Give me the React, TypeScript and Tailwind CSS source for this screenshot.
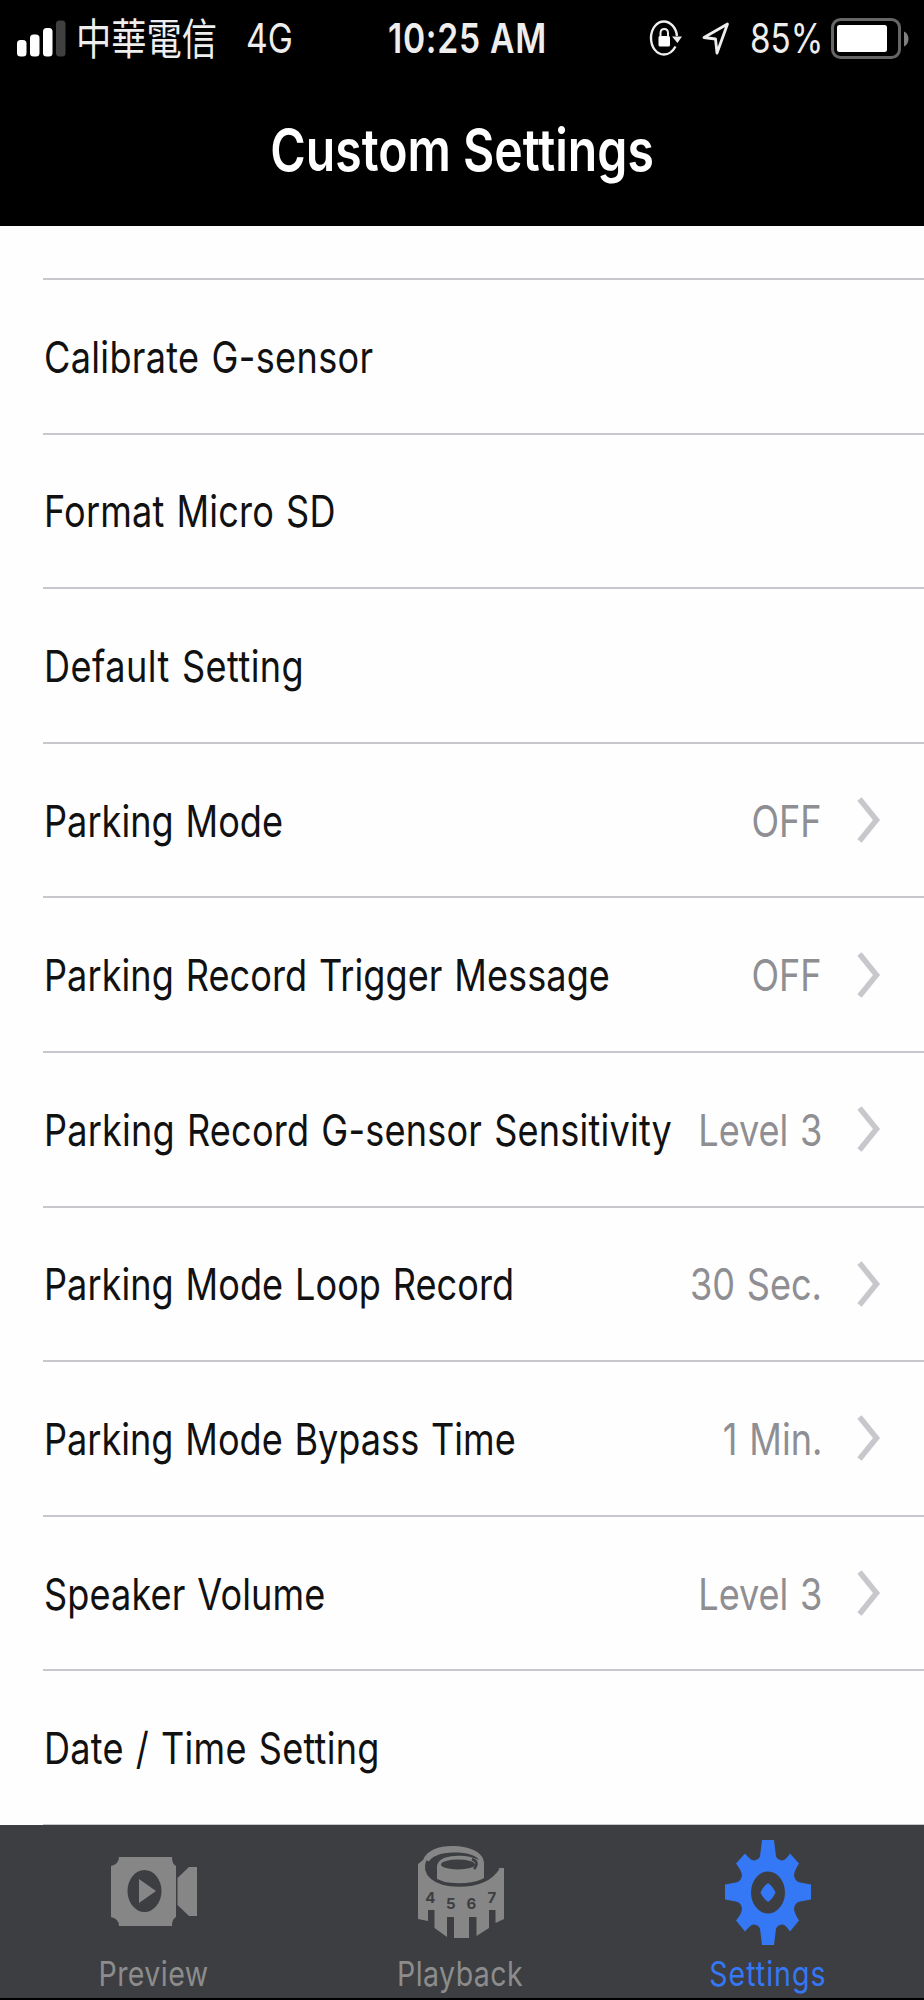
import React from 'react';

type Row = { label: string; value?: string; tracking: string };

const rows: Row[] = [
  { label: 'Calibrate G-sensor', tracking: 'tracking-[0.4px]' },
  { label: 'Format Micro SD', tracking: 'tracking-[0.25px]' },
  { label: 'Default Setting', tracking: 'tracking-[0.55px]' },
  { label: 'Parking Mode', value: 'OFF', tracking: 'tracking-[0.05px]' },
  { label: 'Parking Record Trigger Message', value: 'OFF', tracking: 'tracking-[0.08px]' },
  { label: 'Parking Record G-sensor Sensitivity', value: 'Level 3', tracking: 'tracking-[0.26px]' },
  { label: 'Parking Mode Loop Record', value: '30 Sec.', tracking: 'tracking-[0.06px]' },
  { label: 'Parking Mode Bypass Time', value: '1 Min.', tracking: 'tracking-[0.01px]' },
  { label: 'Speaker Volume', value: 'Level 3', tracking: 'tracking-[0.15px]' },
  { label: 'Date / Time Setting', tracking: 'tracking-[0.3px]' },
];

function StatusBar() {
  return (
    <div className="flex h-[78px] items-center pl-[17px] pr-[15px] text-[41px] leading-none whitespace-nowrap text-[#eeeeee]">
      <svg width="49" height="37" viewBox="0 0 49 37" className="mb-[2px] shrink-0">
        <rect x="0" y="20" width="9.5" height="16.5" rx="3.5" fill="#fff" />
        <rect x="13" y="14.5" width="9.5" height="22" rx="3.5" fill="#fff" />
        <rect x="26" y="8" width="9.5" height="28.5" rx="3.5" fill="#fff" />
        <rect x="39" y="0.5" width="9.5" height="36" rx="3.5" fill="#404040" />
      </svg>
      <div className="mb-[3px] ml-[10px] w-[170px]">
        <span className="inline-block origin-left scale-x-[0.82] font-['Noto_Sans_CJK_TC',sans-serif] text-[43px] font-normal">中華電信</span>
      </div>
      <div className="mb-[1px] w-[142px]">
        <span className="inline-block origin-left scale-x-[0.82] font-normal">4G</span>
      </div>
      <div className="mb-[1px] w-[262px]">
        <span className="inline-block origin-left scale-x-[0.82] font-semibold tracking-[0.9px]">10:25 AM</span>
      </div>
      <svg width="34" height="38" viewBox="0 0 34 38" className="mb-[2px] shrink-0" fill="none" stroke="#eee" strokeWidth="2.4">
        <path d="M28 17C27 8 21 2.500 15 2.500C7.500 2.500 2 10 2 19S7.500 35.500 15 35.500C20 35.500 24 32 26.500 27.500" />
        <path d="M23 17.500H33L28.500 24Z" fill="#eee" stroke="none" />
        <rect x="9.500" y="17" width="11.500" height="10.500" rx="1.500" fill="#fff" stroke="none" />
        <path d="M11.500 18V14C11.500 8.500 19 8.500 19 14V18" strokeWidth="2" />
      </svg>
      <svg width="28" height="34" viewBox="0 0 28 34" className="ml-[19px] shrink-0" fill="none" stroke="#eee" strokeWidth="2.8" strokeLinejoin="round">
        <path d="M25.500 2L2 15.500L13.500 17L15 31Z" />
      </svg>
      <div className="mb-[1px] ml-[20px] w-[81px]">
        <span className="inline-block origin-left scale-x-[0.81] font-normal">85%</span>
      </div>
      <svg width="78" height="42" viewBox="0 0 78 42" className="mb-[1px] shrink-0">
        <rect x="1.500" y="1.500" width="67" height="38" rx="8" fill="none" stroke="#666" strokeWidth="3" />
        <rect x="6" y="7" width="50" height="27" rx="2.500" fill="#fff" />
        <path d="M73 13.500C79 16 79 26 73 28.500Z" fill="#808080" />
      </svg>
    </div>
  );
}

function Chevron() {
  return (
    <svg width="24" height="46" viewBox="0 0 24 46" className="shrink-0" fill="none" stroke="#c7c7cc" strokeWidth="5.500">
      <path d="M2.500 2L19.500 23L2.500 44" />
    </svg>
  );
}

function SettingRow({ label, value, tracking }: Row) {
  return (
    <li className="ml-[43px] flex h-[154.600px] items-center border-b-2 border-[#c8c7cc] pr-[43px] whitespace-nowrap">
      <div className="w-0 flex-1 pt-[1px] pl-[1px]">
        <span className={`inline-block origin-left scale-x-[0.82] text-[44px] leading-none text-[#111] [word-spacing:2px] ${tracking}`}>{label}</span>
      </div>
      {value && (
        <>
          <div className="mr-[35px] flex w-0 justify-end pt-[1px]">
            <span className="inline-block origin-right scale-x-[0.82] text-[44px] leading-none text-[#8e8e93] [word-spacing:2px]">{value}</span>
          </div>
          <Chevron />
        </>
      )}
    </li>
  );
}

function PreviewIcon() {
  return (
    <svg width="88" height="106" viewBox="0 0 88 106" fill="#868686">
      <path d="M9 18H62Q62 25 66 27V78Q62 80 62 87H9Q9 80 1 78V27Q9 25 9 18ZM34.500 31A17 21 0 1 0 34.500 73A17 21 0 1 0 34.500 31Z" fillRule="evenodd" />
      <path d="M29 40L46 52L29 64Z" />
      <path d="M67.500 39L79 28H87V77H79L67.500 66Z" />
    </svg>
  );
}

function PlaybackIcon() {
  return (
    <svg width="88" height="106" viewBox="0 0 88 106">
      <path
        d="M1 25L6 21C10 11 22 7 35 7C54 7 67 14 67 24V38Q76 36 81 29H87V80L78.500 84V71H72V89L59.500 97V78H52V99H37V78H30V98L17.500 89V71H11V82L1 80Z"
        fill="#868686"
      />
      <path d="M67 40L81 29L84 24L67 24Z" fill="#3d3e42" />
      <path d="M11 22C6 34 16 46 42 46C62 46 74 40 81 29" fill="none" stroke="#3d3e42" strokeWidth="3.500" />
      <path d="M10 26C13 17 24 13.500 37 13.500C50 13.500 59 16 62 21C54 17 46 16.500 38 17C27 17.500 21 21 20 27V42C13 38 9 32 10 26Z" fill="#3d3e42" />
      <ellipse cx="41" cy="25.500" rx="17" ry="5" fill="#3d3e42" />
      <path d="M55 20Q63 23 57 30" fill="none" stroke="#3d3e42" strokeWidth="2.500" />
      <g fill="#3d3e42" textAnchor="middle" className="text-[15px] font-bold">
        <text x="13.500" y="64">4</text>
        <text x="34" y="70">5</text>
        <text x="54.500" y="70">6</text>
        <text x="75" y="64">7</text>
      </g>
    </svg>
  );
}

function SettingsIcon() {
  return (
    <svg width="88" height="106" viewBox="0 -0.5 88 106" fill="#3478f6">
      <path
        fillRule="evenodd"
        d="M38 0.500H50L52 17Q54 21 59 21Q62 20 66 14L75 24Q70 32 70 36Q71 42 76 43L87 45V60L76 62Q71 63 70 69Q70 73 75 81L66 92Q62 86 59 85Q54 85 52 89L50 105.500H38L36 89Q34 85 29 85Q26 86 21 92L12 81Q18 74 18 69Q17 63 12 62L1 60V45L12 43Q17 42 18 36Q18 32 12 24L21 14Q26 20 29 21Q34 21 36 17ZM44 32A17 21 0 1 0 44 74A17 21 0 1 0 44 32Z"
      />
      <path d="M44 43.500Q49 47 51.500 53Q49 59 44 62.500Q39 59 36.500 53Q39 47 44 43.500Z" />
    </svg>
  );
}

function Tab({ icon, label, active }: { icon: React.ReactNode; label: string; active?: boolean }) {
  return (
    <div className={active ? 'flex flex-1 flex-col items-center tracking-[1.2px] text-[#3478f6]' : 'flex flex-1 flex-col items-center tracking-[0.5px] text-[#8c8c8c]'}>
      {icon}
      <span className="mt-[9px] scale-x-[0.84] text-[34px] leading-[40px]">{label}</span>
    </div>
  );
}

export default function App() {
  return (
    <div className="flex h-[2000px] w-[924px] flex-col overflow-hidden bg-black font-['Inter',sans-serif]">
      <header className="h-[226px] shrink-0 text-white">
        <StatusBar />
        <h1 className="flex h-[148px] justify-center pt-[40px]">
          <span className="scale-x-[0.83] text-[58px] leading-[64px] font-semibold whitespace-nowrap">Custom Settings</span>
        </h1>
      </header>

      <main className="h-[1599px] shrink-0 overflow-hidden bg-[#fefefe]">
        <div className="ml-[43px] h-[54px] border-b-2 border-[#c8c7cc]" />
        <ul>
          {rows.map((row) => (
            <SettingRow key={row.label} {...row} />
          ))}
        </ul>
      </main>

      <nav className="flex h-[173px] shrink-0 bg-[#3d3e42] pt-[14px] pr-[3px]">
        <Tab icon={<PreviewIcon />} label="Preview" />
        <Tab icon={<PlaybackIcon />} label="Playback" />
        <Tab icon={<SettingsIcon />} label="Settings" active />
      </nav>
    </div>
  );
}
